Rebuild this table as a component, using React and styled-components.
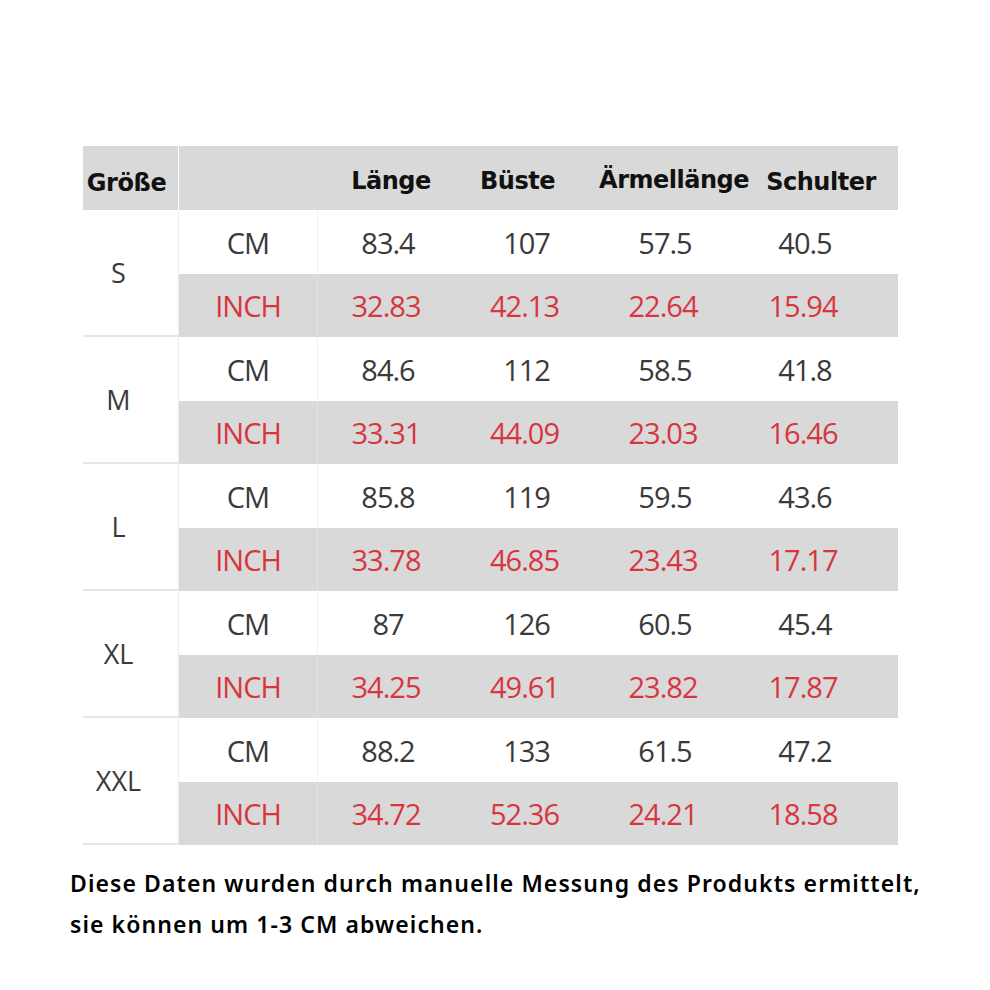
import React from 'react';
import styled, { createGlobalStyle } from 'styled-components';

const GlobalStyle = createGlobalStyle`
  html, body {
    margin: 0;
    padding: 0;
    background: #ffffff;
  }
`;

const GRAY = '#d9d9d9';
const COLS = '139px 140px 137px 140px 140px';

const Page = styled.div`
  width: 990px;
  height: 990px;
  box-sizing: border-box;
  padding: 146px 0 0 83px;
  background: #ffffff;
`;

const Table = styled.div`
  width: 815px;
`;

const HeaderRow = styled.div`
  display: grid;
  grid-template-columns: 95px 1fr;
  column-gap: 1px;
  height: 64px;
`;

const SizeHead = styled.div`
  background: ${GRAY};
  display: flex;
  align-items: center;
  justify-content: center;
  padding: 10px 8px 0 0;
  font-family: 'DejaVu Sans', Verdana, sans-serif;
  font-weight: 700;
  font-size: 24px;
  color: #111;
  letter-spacing: -0.4px;
`;

const HeadCells = styled.div`
  background: ${GRAY};
  display: grid;
  grid-template-columns: ${COLS};
  padding-right: 23px;
`;

const shiftPad = (s = 0) =>
  `padding-left: ${s > 0 ? s * 2 : 0}px; padding-right: ${s < 0 ? -s * 2 : 0}px;`;

const HeadCell = styled.div`
  display: flex;
  align-items: center;
  justify-content: center;
  white-space: nowrap;
  font-family: 'DejaVu Sans', Verdana, sans-serif;
  font-weight: 700;
  font-size: 24px;
  letter-spacing: -0.5px;
  color: #111;
  margin-top: ${(p) => p.$dy || 0}px;
  ${(p) => shiftPad(p.$shift)}
`;

const Group = styled.div`
  display: grid;
  grid-template-columns: 95px 1fr;
  column-gap: 1px;
  background: #ececec;
`;

const SizeCell = styled.div`
  background: #ffffff;
  border-bottom: 2px solid #e6e6e6;
  display: flex;
  align-items: center;
  justify-content: center;
  padding-right: 24px;
  font-family: 'Open Sans', 'Noto Sans', sans-serif;
  font-size: 27px;
  color: #3a3a3a;
`;

const UnitRows = styled.div`
  display: flex;
  flex-direction: column;
`;

const DataRow = styled.div`
  display: grid;
  grid-template-columns: ${COLS};
  padding-right: 23px;
  height: ${(p) => (p.$inch ? 63 : 64)}px;
  background: ${(p) => (p.$inch ? GRAY : '#ffffff')};
  color: ${(p) => (p.$inch ? '#d8363f' : '#3a3a3a')};
`;

const Cell = styled.div`
  display: flex;
  align-items: center;
  justify-content: center;
  font-family: 'Open Sans', 'Noto Sans', sans-serif;
  font-size: 29px;
  letter-spacing: -1px;
  ${(p) => shiftPad(p.$shift)}
`;

const UnitCell = styled(Cell)`
  border-right: 1px solid ${(p) => (p.$inch ? '#e3e3e3' : '#f2f2f2')};
`;

const Note = styled.p`
  margin: 18px 0 0 -13px;
  font-family: 'Noto Sans', 'Open Sans', sans-serif;
  font-weight: 600;
  font-size: 23px;
  letter-spacing: 1.08px;
  line-height: 41px;
  color: #000;
`;

const headers = [
  { label: 'Länge', shift: 3, dy: 5 },
  { label: 'Büste', shift: -9, dy: 5 },
  { label: 'Ärmellänge', shift: 9, dy: 3 },
  { label: 'Schulter', shift: 16, dy: 8 },
];

const sizes = [
  { size: 'S', cm: ['83.4', '107', '57.5', '40.5'], inch: ['32.83', '42.13', '22.64', '15.94'] },
  { size: 'M', cm: ['84.6', '112', '58.5', '41.8'], inch: ['33.31', '44.09', '23.03', '16.46'] },
  { size: 'L', cm: ['85.8', '119', '59.5', '43.6'], inch: ['33.78', '46.85', '23.43', '17.17'] },
  { size: 'XL', cm: ['87', '126', '60.5', '45.4'], inch: ['34.25', '49.61', '23.82', '17.87'] },
  { size: 'XXL', cm: ['88.2', '133', '61.5', '47.2'], inch: ['34.72', '52.36', '24.21', '18.58'] },
];

function App() {
  return (
    <Page>
      <GlobalStyle />
      <Table>
        <HeaderRow>
          <SizeHead>Größe</SizeHead>
          <HeadCells>
            <HeadCell />
            {headers.map((h) => (
              <HeadCell key={h.label} $shift={h.shift} $dy={h.dy}>
                {h.label}
              </HeadCell>
            ))}
          </HeadCells>
        </HeaderRow>
        {sizes.map((s) => (
          <Group key={s.size}>
            <SizeCell>{s.size}</SizeCell>
            <UnitRows>
              <DataRow>
                <UnitCell>CM</UnitCell>
                {s.cm.map((v, i) => (
                  <Cell key={i}>{v}</Cell>
                ))}
              </DataRow>
              <DataRow $inch>
                <UnitCell $inch>INCH</UnitCell>
                {s.inch.map((v, i) => (
                  <Cell key={i} $shift={-2}>
                    {v}
                  </Cell>
                ))}
              </DataRow>
            </UnitRows>
          </Group>
        ))}
      </Table>
      <Note>
        Diese Daten wurden durch manuelle Messung des Produkts ermittelt,
        <br />
        sie können um 1-3 CM abweichen.
      </Note>
    </Page>
  );
}

export default App;
